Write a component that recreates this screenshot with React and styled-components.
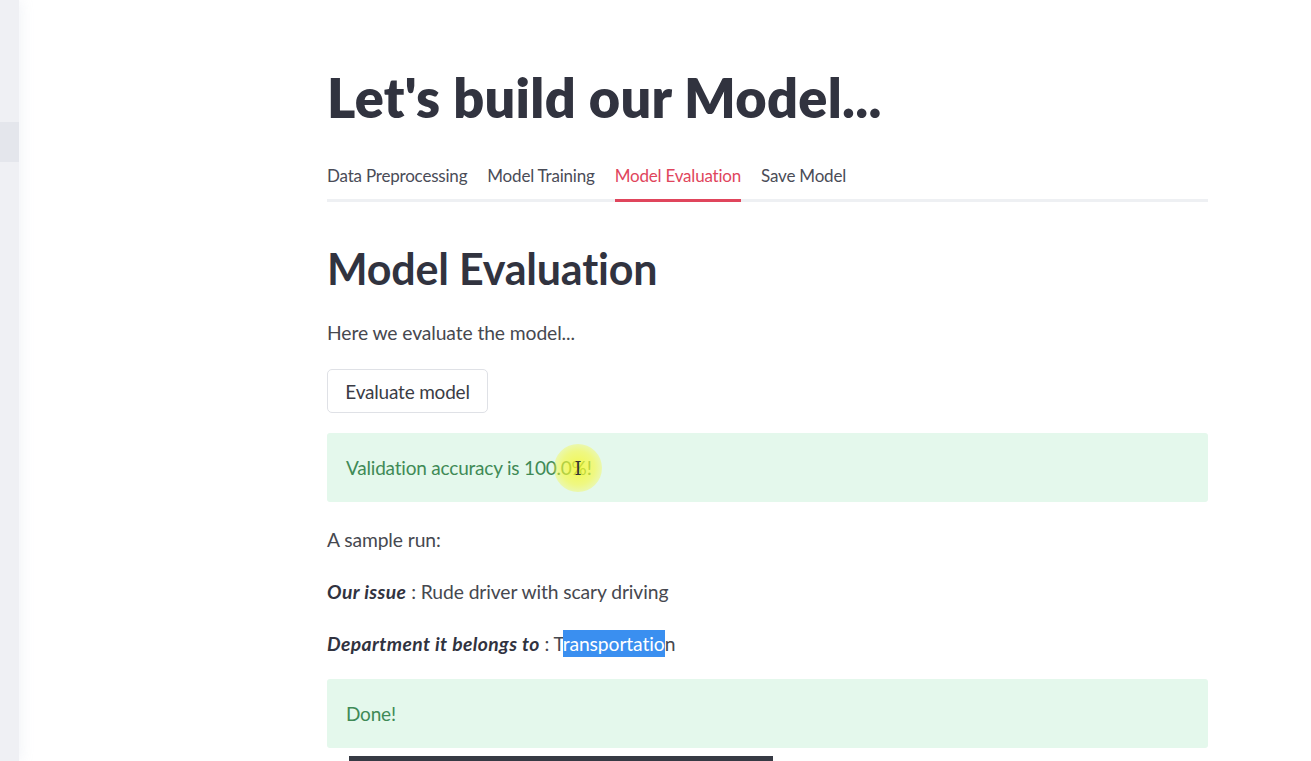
import styled, { createGlobalStyle } from "styled-components";

const Global = createGlobalStyle`
  html, body {
    margin: 0;
    padding: 0;
    background: #ffffff;
    overflow: hidden;
  }
  body {
    font-family: "Lato", "Open Sans", sans-serif;
    color: #31333f;
  }
`;

const Page = styled.div`
  display: flex;
  width: 1311px;
  height: 761px;
  overflow: hidden;
`;

const Rail = styled.div`
  width: 19px;
  flex: none;
  background: #eff0f4;
  padding-top: 122px;
  box-shadow: 2px 0 14px rgba(240, 242, 246, 0.9);
`;

const RailItem = styled.div`
  height: 40px;
  background: #e4e6ec;
`;

const Main = styled.main`
  flex: 1;
  padding: 0 0 0 308px;
`;

const Column = styled.div`
  width: 881px;
  position: relative;
`;

const Title = styled.h1`
  margin: 0;
  padding-top: 66px;
  font-size: 54px;
  line-height: 64px;
  font-weight: 800;
  letter-spacing: 0.3px;
  color: #31333f;
`;

const Tabs = styled.div`
  display: flex;
  gap: 20px;
  margin-top: 34px;
  border-bottom: 3px solid #eef0f3;
`;

const Tab = styled.div`
  font-size: 17px;
  line-height: 24px;
  padding-bottom: 11px;
  margin-bottom: -3px;
  color: ${(p) => (p.$active ? "#e0455c" : "#4a4c57")};
  border-bottom: 3px solid ${(p) => (p.$active ? "#e0455c" : "transparent")};
  letter-spacing: -0.2px;
`;

const Heading = styled.h2`
  margin: 41px 0 0;
  font-size: 43px;
  line-height: 52px;
  font-weight: 700;
  letter-spacing: -0.2px;
  color: #31333f;
`;

const Text = styled.p`
  margin: ${(p) => p.$top || 0}px 0 0;
  font-size: 19.3px;
  line-height: 28px;
  color: #46484f;
  letter-spacing: -0.1px;

  em {
    font-weight: 700;
    color: #31333f;
    letter-spacing: 0.4px;
  }
`;

const Button = styled.button`
  display: block;
  margin-top: 22px;
  height: 44px;
  width: 161px;
  padding: 0;
  border: 1px solid #dfe1e6;
  border-radius: 5px;
  background: #ffffff;
  font-family: inherit;
  font-size: 19px;
  color: #3a3c45;
  letter-spacing: -0.2px;
`;

const Alert = styled.div`
  margin-top: ${(p) => p.$top}px;
  height: 69px;
  display: flex;
  align-items: center;
  padding: 0 19px;
  background: #e4f8ec;
  border-radius: 3px;
  font-size: 19px;
  color: #3f8a56;
  letter-spacing: -0.2px;
  position: relative;
`;

const Selected = styled.span`
  background: #3a8ff0;
  color: #ffffff;
  padding: 2px 0;
`;

const Highlight = styled.div`
  position: absolute;
  left: 227px;
  top: 11px;
  width: 48px;
  height: 48px;
  border-radius: 50%;
  background: radial-gradient(circle, rgba(246, 248, 40, 0.8) 0%, rgba(246, 248, 60, 0.6) 50%, rgba(246, 248, 70, 0) 100%);
  display: flex;
  align-items: center;
  justify-content: center;
  color: #333;
  font-size: 18px;
  font-family: "DejaVu Serif", serif;
`;

const DarkBar = styled.div`
  margin: 8px 0 0 22px;
  width: 424px;
  height: 20px;
  background: #363a44;
`;

export default function App() {
  return (
    <>
      <Global />
      <Page>
        <Rail>
          <RailItem />
        </Rail>
        <Main>
          <Column>
            <Title>Let's build our Model...</Title>
            <Tabs>
              <Tab>Data Preprocessing</Tab>
              <Tab>Model Training</Tab>
              <Tab $active>Model Evaluation</Tab>
              <Tab>Save Model</Tab>
            </Tabs>
            <Heading>Model Evaluation</Heading>
            <Text $top={24}>Here we evaluate the model...</Text>
            <Button>Evaluate model</Button>
            <Alert $top={20}>
              Validation accuracy is 100.0%!
              <Highlight>I</Highlight>
            </Alert>
            <Text $top={24}>A sample run:</Text>
            <Text $top={24}>
              <em><i>Our issue</i></em> : Rude driver with scary driving
            </Text>
            <Text $top={24}>
              <em><i>Department it belongs to</i></em> : T<Selected>ransportatio</Selected>n
            </Text>
            <Alert $top={21}>Done!</Alert>
            <DarkBar />
          </Column>
        </Main>
      </Page>
    </>
  );
}
